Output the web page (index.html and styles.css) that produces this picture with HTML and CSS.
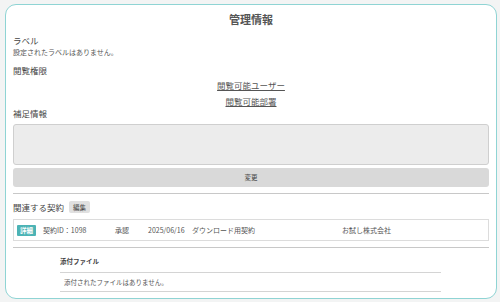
FILE: index.html
```html
<!DOCTYPE html>
<html lang="ja">
<head>
<meta charset="utf-8">
<link rel="stylesheet" href="styles.css">
</head>
<body>
<div class="card">
  <h1 class="title">管理情報</h1>
  <div class="label first">ラベル</div>
  <div class="note">設定されたラベルはありません。</div>
  <div class="label sec">閲覧権限</div>
  <div class="links">
    <a class="link">閲覧可能ユーザー</a>
    <a class="link">閲覧可能部署</a>
  </div>
  <div class="label">補足情報</div>
  <div class="textarea"></div>
  <div class="btn">変更</div>
  <hr class="rule">
  <div class="related">
    <span class="label">関連する契約</span>
    <span class="edit">編集</span>
  </div>
  <div class="contract">
    <span class="badge">詳細</span>
    <span class="c-id">契約ID：1098</span>
    <span class="c-status">承認</span>
    <span class="c-date">2025/06/16</span>
    <span class="c-name">ダウンロード用契約</span>
    <span class="c-company">お試し株式会社</span>
  </div>
  <hr class="rule rule2">
  <div class="attach">
    <div class="attach-title">添付ファイル</div>
    <div class="attach-row">添付されたファイルはありません。</div>
  </div>
</div>
</body>
</html>
```

FILE: styles.css
```css
html, body {
  margin: 0;
  padding: 0;
}
body {
  background: #f3f4f4;
  font-family: "Noto Sans CJK JP", "Noto Sans", sans-serif;
  color: #555;
  padding: 4px 3px 3px 5px;
  width: 500px;
  height: 302px;
  box-sizing: border-box;
}
.card {
  width: 492px;
  height: 295px;
  box-sizing: border-box;
  background: #fff;
  border: 1px solid #8fd4d4;
  border-radius: 11px;
  padding: 0 7px;
  overflow: hidden;
}
.title {
  margin: 6px 0 0;
  text-align: center;
  font-size: 11px;
  font-weight: bold;
  line-height: 16px;
  color: #555;
}
.label {
  font-size: 8.5px;
  line-height: 12px;
  color: #444;
}
.first {
  margin-top: 7px;
}
.note {
  margin-top: 1px;
  font-size: 7px;
  line-height: 10px;
  color: #555;
}
.sec {
  margin-top: 7px;
}
.links {
  display: flex;
  flex-direction: column;
  align-items: center;
  gap: 4px;
  margin-top: 3px;
  margin-bottom: 0;
}
.link {
  font-size: 8.5px;
  line-height: 12px;
  color: #555;
  text-decoration: underline;
  text-underline-offset: 1px;
}
.textarea {
  margin-top: 5px;
  height: 39px;
  background: #ececec;
  border: 1px solid #cfcfcf;
  border-radius: 3px;
}
.btn {
  margin-top: 3px;
  height: 19px;
  background: #d9d9d9;
  border-radius: 3px;
  font-size: 6.5px;
  line-height: 19px;
  text-align: center;
  color: #444;
}
.rule {
  margin: 6px 0 0;
  border: 0;
  border-top: 1.5px solid #c8c8c8;
}
.related {
  display: flex;
  align-items: center;
  gap: 5px;
  margin-top: 7px;
}
.edit {
  font-size: 6.5px;
  line-height: 12px;
  padding: 0 4px;
  background: #e0e0e0;
  border-radius: 2px;
  color: #444;
}
.contract {
  margin-top: 6px;
  height: 22px;
  box-sizing: border-box;
  border: 1px solid #dcdcdc;
  display: flex;
  align-items: center;
  padding-left: 3px;
  font-size: 7px;
  color: #555;
}
.badge {
  background: #4cb3b5;
  color: #fff;
  font-weight: bold;
  font-size: 6.5px;
  line-height: 11px;
  padding: 0 3px;
  border-radius: 1px;
}
.c-id { margin-left: 7px; width: 72px; }
.c-status { width: 33px; }
.c-date { width: 44px; }
.c-name { width: 150px; }
.rule2 {
  margin-top: 6px;
}
.attach {
  margin: 8px 0 0 47px;
  width: 381px;
}
.attach-title {
  font-size: 6.5px;
  font-weight: bold;
  line-height: 10px;
  padding-bottom: 6px;
  border-bottom: 1px solid #d4d4d4;
  color: #444;
}
.attach-row {
  font-size: 6.5px;
  line-height: 18px;
  padding-left: 4px;
  border-bottom: 1px solid #d4d4d4;
  color: #555;
}
```
